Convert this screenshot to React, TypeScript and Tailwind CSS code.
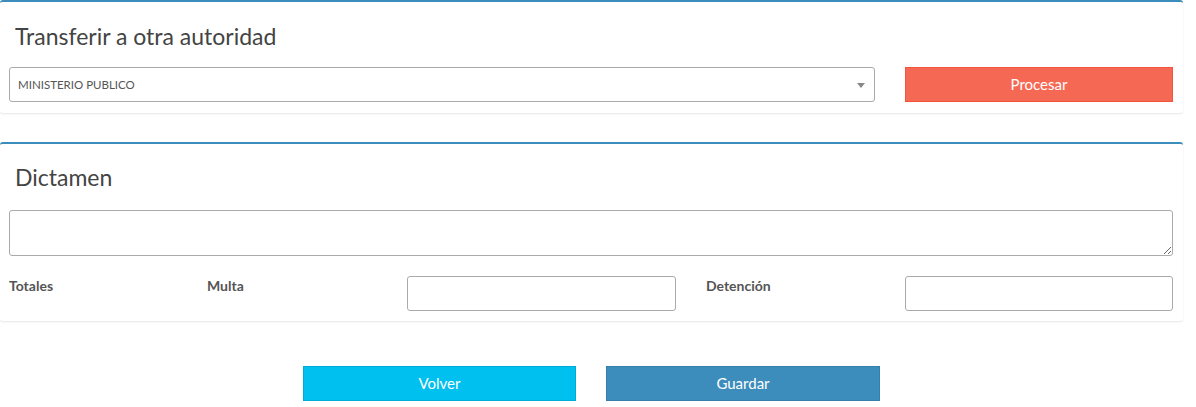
export default function App() {
  const font = { fontFamily: "'Source Sans Pro', Lato, 'Open Sans', sans-serif" };
  return (
    <main className="min-h-[407px] bg-white text-[#333]" style={font}>
      <div className="w-[1183px]">
        <section className="rounded-[3px] border-t-2 border-[#3c8dbc] bg-white shadow-[0_1px_2px_rgba(0,0,0,0.1)] pb-[11px]">
          <h3 className="px-[15px] pt-[20px] pb-[17px] text-[23px] leading-[28px] text-[#444]">Transferir a otra autoridad</h3>
          <div className="flex items-center px-[9px]">
            <div className="flex h-[35px] w-[866px] items-center justify-between rounded-[3px] border border-[#aaa] pl-[8px] pr-[9px] text-[11.5px] text-[#555]">
              <span>MINISTERIO PUBLICO</span>
              <span className="mt-[1px] h-0 w-0 border-x-[4px] border-t-[5px] border-x-transparent border-t-[#888]" />
            </div>
            <button className="ml-[30px] h-[35px] w-[268px] border border-[#f4543c] bg-[#f56954] text-[15px] text-white">Procesar</button>
          </div>
        </section>

        <section className="mt-[29px] rounded-[3px] border-t-2 border-[#3c8dbc] bg-white shadow-[0_1px_2px_rgba(0,0,0,0.1)] pb-[10px]">
          <h3 className="px-[15px] pt-[19px] pb-[19px] text-[23px] leading-[28px] text-[#444]">Dictamen</h3>
          <div className="px-[9px]">
            <textarea className="block h-[46px] w-[1164px] rounded-[3px] border border-[#aaa] outline-none" />
          </div>
          <div className="mt-[20px] flex items-start px-[9px] text-[14px] font-bold text-[#555]">
            <span className="-mt-[1px] w-[198px]">Totales</span>
            <span className="-mt-[1px] w-[200px]">Multa</span>
            <input className="h-[35px] w-[269px] rounded-[3px] border border-[#aaa] outline-none" />
            <span className="ml-[30px] -mt-[1px] w-[199px]">Detención</span>
            <input className="h-[35px] w-[268px] rounded-[3px] border border-[#aaa] outline-none" />
          </div>
        </section>
      </div>

      <div className="mt-[45px] flex justify-center gap-[30px] pr-[13px]">
        <button className="h-[35px] w-[273px] border border-[#00acd6] bg-[#00c0ef] text-[15px] text-white">Volver</button>
        <button className="h-[35px] w-[274px] border border-[#367fa9] bg-[#3c8dbc] text-[15px] text-white">Guardar</button>
      </div>
    </main>
  );
}
